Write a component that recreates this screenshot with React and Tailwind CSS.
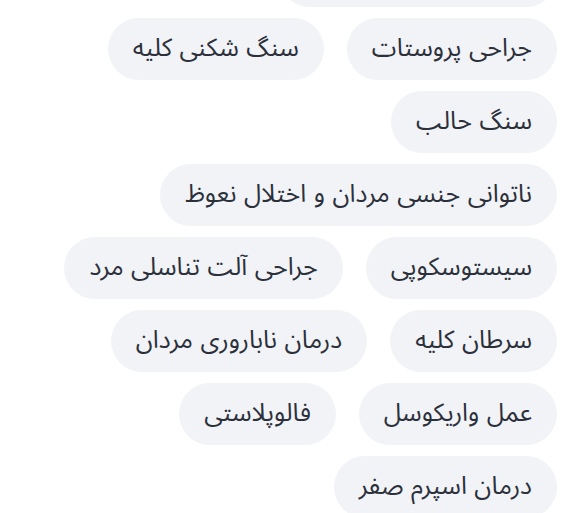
const tags = [
  'درمان بیماری پروستات',
  'جراحی پروستات',
  'سنگ شکنی کلیه',
  'سنگ حالب',
  'ناتوانی جنسی مردان و اختلال نعوظ',
  'سیستوسکوپی',
  'جراحی آلت تناسلی مرد',
  'سرطان کلیه',
  'درمان ناباروری مردان',
  'عمل واریکوسل',
  'فالوپلاستی',
  'درمان اسپرم صفر',
];

export default function App() {
  return (
    <div className="h-[513px] w-[580px] overflow-hidden bg-white">
      <div
        dir="rtl"
        className="-mt-[55px] flex flex-wrap gap-x-[23px] gap-y-[11px] pl-[50px] pr-[23px] font-['Noto_Sans_Arabic',sans-serif]"
      >
        {tags.map((t) => (
          <span
            key={t}
            className="flex h-[62px] items-center whitespace-nowrap rounded-full bg-[#f1f3f7] px-[25px] text-[25px] text-[#2b303b] [word-spacing:1px]"
          >
            {t}
          </span>
        ))}
      </div>
    </div>
  );
}
